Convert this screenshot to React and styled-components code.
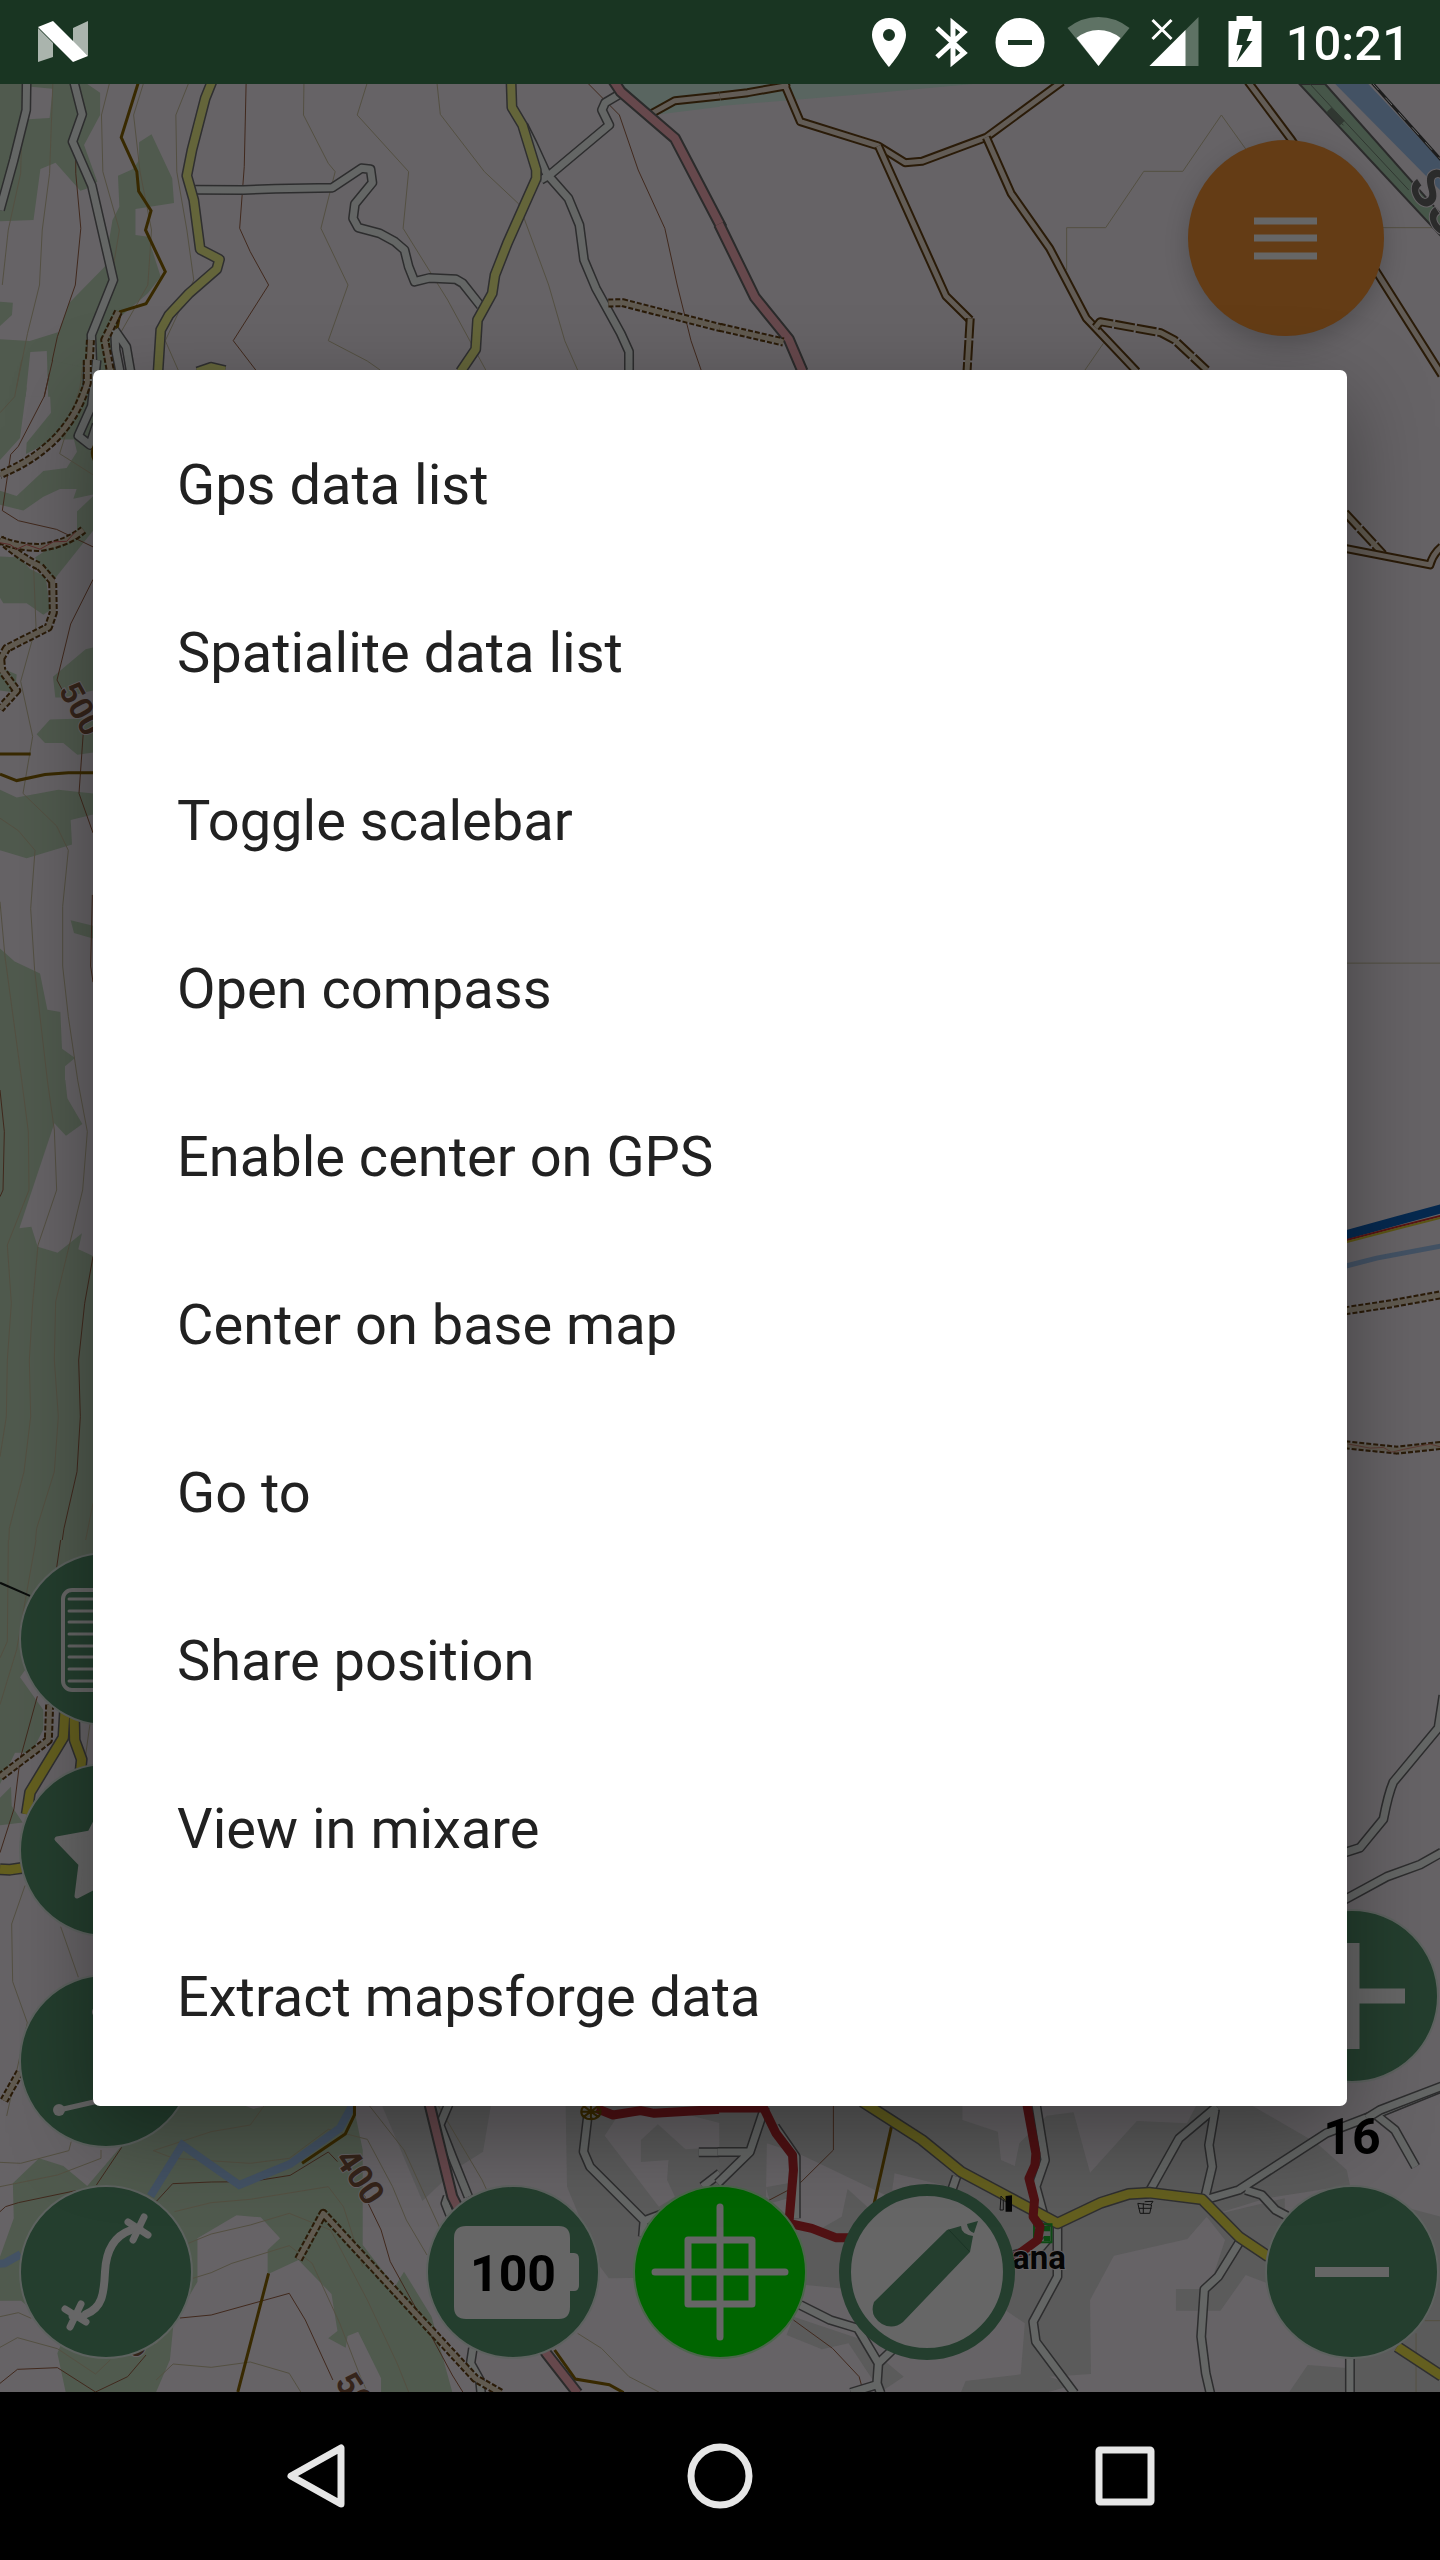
import React from "react";
import styled, { createGlobalStyle } from "styled-components";

const GlobalStyle = createGlobalStyle`
  * { box-sizing: border-box; }
  html, body, #root { height: 100%; }
  body { margin: 0; background: #000; font-family: Roboto, "Liberation Sans", sans-serif; }
  button { font: inherit; color: inherit; cursor: pointer; }
`;

const Screen = styled.div`
  display: grid;
  grid-template-rows: 84px 1fr 168px;
  min-height: 100vh;
`;

/* ---------- status bar ---------- */

const StatusBar = styled.header`
  display: flex;
  align-items: center;
  justify-content: space-between;
  padding: 0 30px 0 33px;
  background: #193522;
  color: #fff;
`;

const StatusGroup = styled.div`
  display: flex;
  align-items: center;
`;

const StatusSvg = styled.svg`
  display: block;
  height: 84px;
`;

const Clock = styled.time`
  padding: 4px 0 0 6px;
  font-size: 49px;
  font-weight: 500;
  line-height: 80px;
`;

function StatusIcon({ width, children }) {
  return (
    <StatusSvg width={width} viewBox={`${-width / 2} 0 ${width} 84`} fill="#fff" aria-hidden="true">
      {children}
    </StatusSvg>
  );
}

/* ---------- map ---------- */

const MapArea = styled.main`
  position: relative;
  overflow: hidden;
  background: #666366;
`;

const MapCanvas = styled.svg`
  position: absolute;
  inset: 0;
  width: 100%;
  height: 100%;

  path { vector-effect: non-scaling-stroke; }
`;

const MapText = styled.text`
  font-family: Roboto, "Liberation Sans", sans-serif;
  font-size: ${(p) => p.$size}px;
  font-weight: ${(p) => p.$weight || 700};
  fill: ${(p) => p.$color};
  stroke: #666366;
  stroke-width: 2px;
  paint-order: stroke;
`;

function Tile({ x, y, sx, sy, children }) {
  return <g transform={`translate(${x} ${y}) scale(${1 / sx} ${1 / sy})`}>{children}</g>;
}

const roadKinds = {
  street: { casing: "#2d2d2e", fill: "#646665", outer: 10, inner: 7 },
  secondary: { casing: "#2f2f30", fill: "#64653a", outer: 11, inner: 8 },
  yellow: { casing: "#2f2f30", fill: "#645f1f", outer: 12, inner: 9 },
  primary: { casing: "#2b2b2b", fill: "#66484c", outer: 12, inner: 8 },
  track: { casing: "#2a1b08", fill: "#625c56", outer: 9, inner: 5 },
  dashed: { casing: "#2a1b08", fill: "#605a50", outer: 9, inner: 5, dash: "5 2" },
  broken: { casing: "#2a1b08", fill: "#605a50", outer: 9, inner: 5, dash: "20 2" },
};

function Road({ kind, d }) {
  const k = roadKinds[kind];
  return (
    <g fill="none" strokeLinejoin="round">
      <path d={d} stroke={k.casing} strokeWidth={k.outer} strokeDasharray={k.dash} />
      <path d={d} stroke={k.fill} strokeWidth={k.inner} />
    </g>
  );
}

const Forest = ({ d }) => <path d={d} fill="#505a4e" />;
const Ground = ({ d }) => <path d={d} fill="#666366" />;
const Town = ({ d }) => <path d={d} fill="#5b5b5b" />;
const Contour = ({ d }) => <path d={d} fill="none" stroke="#545042" strokeWidth="1" />;
const MajorContour = ({ d }) => <path d={d} fill="none" stroke="#41291d" strokeWidth="1" />;
const Trail = ({ d }) => <path d={d} fill="none" stroke="#382900" strokeWidth="3" />;
const River = ({ d }) => <path d={d} fill="none" stroke="#435264" strokeWidth="8" />;
const Route = ({ d }) => <path d={d} fill="none" stroke="#501113" strokeWidth="9" strokeLinejoin="round" />;

function MapDrawing() {
  return (
    <MapCanvas viewBox="0 84 1440 2308" preserveAspectRatio="xMidYMid slice" aria-hidden="true">
      <Tile x={0} y={0} sx={2.178} sy={3}>
        <Forest d="M0 252H190L218 278V345L183 435L212 545L188 566L175 572L121 488L88 507L73 660L0 664Z" />
        <Ground d="M68 260L115 266L108 354L63 358Z" />
        <Forest d="M303 427L330 403L375 535L379 609L295 627V705L322 710L350 830L322 880L262 950L230 1110V1200H105L102 1053L66 1056L55 1200H0V1018L65 1023L128 996L150 910L228 800L245 660L260 620L257 527L290 507L303 480Z" />
        <Forest d="M0 905L28 908L26 945L0 978Z" />
        <path d="M1345 252H1568V320L1425 345Z" fill="#596560" />
        <Contour d="M50 252L45 520L18 690L5 855M115 252L108 520L92 690L86 855L60 1000L32 1190M238 252L221 345L224 515L260 690L240 855M312 252L291 345L305 515L330 690L322 855L262 1000M410 252L383 345L385 515L407 690L422 840L360 1022L388 1110" />
        <Contour d="M662 252L661 345L715 490L730 515L699 685L758 855L715 1022L800 1083L828 1110M799 252L778 345L890 515L878 685L975 900L1058 1110M952 252L959 343L1055 515L1130 612L1195 855L1230 1022L1258 1110" />
        <MajorContour d="M536 252L532 500L522 685L545 755L585 855L508 1022L557 1110M165 450V520L176 685L164 855L125 1010L95 1200M1282 252L1349 345L1390 510L1448 685L1475 855L1505 1022L1527 1110" />
        <Trail d="M303 240L264 412L298 515L302 574L329 632L317 690L360 815L318 911L262 935L255 985L250 1110" />
        <Road kind="street" d="M58 240L57 330L30 480L0 630" />
        <Road kind="street" d="M160 240L179 343L158 425L200 557L247 840L199 1005L202 1110" />
        <Road kind="street" d="M250 990L275 1040L285 1120M250 990L252 1050L262 1120" />
        <Road kind="street" d="M425 569L530 570L600 566L724 563L787 505L807 508L811 548L773 612L769 655L780 683L827 700L860 725L881 750L890 800L903 845L935 834L993 838L1008 850L1047 918" />
        <Road kind="street" d="M1355 278L1318 308L1311 330L1327 375L1197 525L1178 540M1140 375L1160 430L1190 520L1238 595L1262 675L1272 780L1298 865L1352 1000L1370 1055V1120" />
        <Road kind="secondary" d="M463 240L447 295L418 450L407 527L422 600L436 748L478 778L472 808L412 880L368 945L350 990L344 1120M430 1116L460 1102L490 1112" />
        <Road kind="secondary" d="M1113 240L1115 322L1138 375L1168 510L1168 535L1105 730L1078 825L1072 880L1040 960L1036 1048L1003 1115" />
        <Road kind="track" d="M1420 340L1470 302L1568 288" />
        <Road kind="primary" d="M1335 240L1352 275L1470 415L1572 684" />
        <Road kind="dashed" d="M1325 909L1356 908L1572 984" />
        <Road kind="dashed" d="M258 935L228 1020L240 1110" />
        <Road kind="dashed" d="M197 1020L192 1150L175 1200" />
      </Tile>

      <Tile x={720} y={0} sx={2.178} sy={3}>
        <path d="M0 252H550L290 285L0 318Z" fill="#596560" />
        <Contour d="M755 810V683H840L923 514H1008L1092 345L1145 447M1440 683H1568M835 1030L795 1110" />
        <Road kind="track" d="M0 288L60 278L142 258L175 365L345 438L403 488L440 484L580 412L745 245M145 262L138 240" />
        <Road kind="track" d="M345 438L492 888L545 960" />
        <Road kind="broken" d="M545 955L538 1115" />
        <Road kind="track" d="M580 412L634 580L718 745L798 955L908 1115" />
        <Road kind="broken" d="M818 982L828 965L960 998L990 1020L1060 1110" />
        <Road kind="track" d="M1150 245L1245 420L1432 820L1572 1125" />
        <Road kind="primary" d="M-2 672L76 892L150 1018L180 1115" />
        <Road kind="dashed" d="M0 982L138 1026" />
        <path d="M1340 252H1412L1568 480V570Z" fill="#435264" />
        <path d="M1262 252H1318L1575 650V715Z" fill="#465649" stroke="#2b2b2b" strokeWidth="2" />
        <path d="M1285 252L1500 570M1325 330L1358 376" fill="none" stroke="#303731" strokeWidth="1" />
        <path d="M1326 330L1355 370" fill="none" stroke="#303731" strokeWidth="7" />
        <path d="M1420 248L1572 482" fill="none" stroke="#1c1c1c" strokeWidth="3" />
        <path d="M1420 248L1572 482" fill="none" stroke="#666" strokeWidth="1" strokeDasharray="10 10" />
      </Tile>
      <MapText $size={54} $color="#2b2b2b" transform="translate(1406 184) rotate(57)">SS</MapText>

      <Tile x={0} y={360} sx={3} sy={2.178}>
        <Ground d="M0 80H279V1568H0Z" />
        <Forest d="M0 60H80L60 170L0 218ZM145 0L153 115L80 180L78 205L130 185L180 173H222L231 200L200 235L130 242L50 296L0 285V315L70 328L130 298L180 281H230L220 302L279 293V20Z" />
        <Forest d="M279 297L231 330V370L105 430L135 460L150 545L130 555L80 530L10 530L0 518V428L60 430L90 455L160 480L279 372Z" />
        <Forest d="M0 670L50 685L45 724L0 720ZM279 626L257 630L159 690L166 735H190L279 720ZM110 815L150 783L279 780V855L232 860L190 834H135Z" />
        <Forest d="M0 936L50 953L175 936L279 944V990L212 1002L216 1055L80 1085L0 1068ZM212 1220L279 1232V1260L222 1248ZM0 1282L44 1310L120 1336L142 1415L181 1420L186 1500L225 1520L195 1538V1568H0Z" />
        <Contour d="M65 0L44 80L0 115M250 0L240 60L179 204L279 250M100 440L108 580L62 700L98 820L69 944L170 1015L205 1068L188 1190V1320L205 1430L233 1568M0 998L55 1025L105 1068L92 1195L104 1330L142 1568M0 1180L15 1300L65 1568" />
        <MajorContour d="M158 0L132 80L55 188L32 206L7 328L55 350L170 369L279 407M279 478L212 575L171 697L195 730M250 810L237 944L279 1030M277 1165L272 1320L279 1355" />
        <Road kind="street" d="M265 0L262 60M290 0L275 100L235 165L270 185L290 140" />
        <Road kind="dashed" d="M262 0V50Q225 140 130 195Q80 225 0 250" />
        <Road kind="dashed" d="M0 390Q60 430 120 450L158 482L160 550L145 582L20 628L2 650L5 675L50 720L0 760" />
        <Road kind="dashed" d="M0 392Q60 410 125 408Q200 400 250 370" />
        <path d="M0 398L30 402L50 412L80 402L120 412L160 396L200 395L225 375" fill="none" stroke="#5c2c2c" strokeWidth="1" />
        <Trail d="M0 858H92M0 902L50 916L135 903L205 899H279" />
        <path d="M279 185Q266 202 279 220Z" fill="#382900" />
      </Tile>
      <MapText $size={32} $color="#35241a" transform="translate(58 690) rotate(61)">500</MapText>

      <Tile x={0} y={1080} sx={3} sy={3}>
        <Forest d="M0 0H279V1500H0Z" />
        <Ground d="M196 0H279V528L235 508L246 460L173 518L113 500L94 440L58 445L163 130L198 167L247 132L202 55Z" />
        <Contour d="M65 0L85 155L87 330L22 495L34 670L22 840L19 1010L0 1130M142 0L163 150L170 330L114 495L98 670L88 840L92 1010L72 1175L28 1345L22 1500M233 0L262 155L248 330L167 665L163 840L175 1010L163 1175L110 1345L94 1500M279 1270L248 1425" />
        <MajorContour d="M0 30L13 155L9 330L0 350M279 530L254 670L236 840L241 1010L231 1175L192 1345L175 1460" />
      </Tile>

      <Tile x={0} y={1540} sx={3} sy={1.823}>
        <Forest d="M0 0H279V60L60 250L130 310V345L95 388H45L0 445ZM0 470L33 450L35 485L68 515L0 520Z" />
        <Contour d="M25 0L22 185L0 215M108 0L70 130L50 200L0 300M75 630L35 700L38 805L82 880L20 1050M270 335L255 400" />
        <MajorContour d="M112 285L60 400L42 490L0 570M182 0L170 50" />
        <Contour d="M182 705L235 797" />
        <path d="M0 78L90 102" fill="none" stroke="#0b0d0c" strokeWidth="2" />
        <Road kind="dashed" d="M149 300L145 365L0 432M60 970L12 1022" />
        <Road kind="yellow" d="M195 310L190 360L90 460L80 500M222 310L224 365L245 400L240 430M0 600L30 601L65 598" />
      </Tile>

      <Tile x={0} y={2090} sx={2.178} sy={3}>
        <Forest d="M0 632V500L30 385L28 280L85 205L138 228L190 288L262 172L330 40H520L552 57L578 48H770L790 180V465L860 590L880 545L940 680L985 906H860L830 765H893L930 906H830V865L780 725L757 738L753 773L715 745L735 723L722 612L650 510L583 553V480L610 445L568 382L515 376L430 445V575L378 700L370 810L340 906H143L125 790L140 740L46 632Z" />
        <Town d="M830 40H1070L1052 185L995 235L920 333L885 220Z" />
        <Town d="M1232 40H1570V560L1326 565L1307 530L1235 290Z" />
        <Ground d="M1345 78L1317 137L1435 350L1470 320L1453 270L1456 210L1396 216V150L1433 103L1493 178L1570 172V100L1500 75Z" />
        <Contour d="M0 217L45 220L150 182L155 155M0 290L125 255L220 205V180M334 182L460 125L545 105L575 48M334 182L378 205L545 220L630 205L715 118L800 148L855 290L885 390L930 495M380 365L460 338L545 328L715 290L748 350L790 530M410 460L460 432L545 405L630 370L720 420L800 630L865 820L890 906M420 565L460 548L505 520L630 467L680 520L740 700L785 860L800 906M0 680L40 668L68 685M0 772L38 743L125 776L208 852L240 810M340 870L377 822L460 832L545 816L630 850L655 906M805 48L880 180L985 495M955 48L1050 270L1075 345M1258 730L1310 775L1370 860L1435 906" />
        <MajorContour d="M0 365L12 350L40 338L165 302M265 172L210 285M340 335L376 281L460 276L545 275L632 256L715 186L735 215M793 315L830 420L850 515L940 740L985 855L1008 906M392 684L460 675L630 610L665 690L725 870M0 880L38 838L125 833L208 906L278 860L318 795" />
        <River d="M-5 522L10 520L45 493M328 318L397 165L521 285L632 222L740 115L768 45" />
        <Trail d="M585 550L518 906M658 220L752 132L772 75V40M1208 780L1253 867L1327 884L1358 908" />
        <Road kind="street" d="M978 40L958 105L985 200L1020 320M975 320L970 340L980 375M1030 775L1025 820L1045 870L1048 910" />
        <Road kind="street" d="M1280 80L1271 185L1285 230L1403 392L1450 368M1403 392L1400 440M1568 187H1522M1568 250L1530 290" />
        <Road kind="primary" d="M935 40L985 320L1040 470L1190 790L1258 910" />
        <Road kind="dashed" d="M650 508L704 370L1035 865L1092 910" />
        <Route d="M1300 56L1335 75L1395 62L1425 70L1570 58" />
        <path d="M1266 65A20 22 0 1 0 1308 65A20 22 0 1 0 1266 65M1266 65H1308M1287 42V86M1272 49L1302 80M1302 49L1272 80" fill="none" stroke="#382900" strokeWidth="2" />
      </Tile>
      <MapText $size={34} $color="#35241a" transform="translate(334 2159) rotate(56)">400</MapText>
      <MapText $size={34} $color="#35241a" transform="translate(334 2382) rotate(57)">500</MapText>
      <MapText $size={34} $color="#35241a" transform="translate(134 2360) rotate(-40)">50</MapText>

      <Tile x={720} y={2090} sx={2.178} sy={3}>
        <Town d="M-2 40H1150L1300 160L1365 240L1372 285L1190 325L1060 380L1018 447L858 497L806 630L808 852L717 860L770 885L715 906H525L535 873L655 853L664 700L600 640L0 560Z" />
        <Ground d="M528 40H1040L1017 100L908 93L806 248L770 67L712 77L652 160L642 228L612 210L605 125L528 90Z" />
        <Ground d="M102 160L170 190L375 325L360 400L278 297L265 380L215 420L150 380L100 320ZM380 250L500 290L440 310L375 300Z" />
        <Town d="M100 292L165 275L160 320L110 340ZM1060 380L1230 325V600L1145 555L1090 662H993V597H1065L1100 450ZM145 735L160 680L300 745L400 860L350 906L280 760L222 778ZM1240 906L1280 825L1370 835L1360 906ZM1500 355L1570 380V906H1380V800Z" />
        <Contour d="M1516 730V906M1535 692H1568" />
        <MajorContour d="M247 48V180L170 285L105 332M160 690L245 775L303 860L310 895" />
        <Trail d="M375 100L335 345" />
        <Road kind="street" d="M98 50L65 186L-5 280M-5 186H65M165 385L165 200L120 110M515 260L505 300" />
        <Road kind="street" d="M688 40L708 210L688 290L708 390L735 400V560L682 695L688 755L772 910M640 495L700 470L712 450" />
        <Road kind="street" d="M935 305L1000 145L1082 50M1078 60L1065 165L1072 230L1055 330L1130 300L1320 130L1430 72L1568 -5M1145 300L1180 315L1210 360L1235 378M1430 76L1470 120L1515 230" />
        <Road kind="street" d="M1132 455L1085 560L1055 598L1048 740L1058 850L1068 910M1372 805V910M175 645L240 690L300 715L345 820L375 780M345 820L342 880L350 910M342 884L285 908" />
        <Road kind="yellow" d="M310 35L440 150L525 245L620 315L735 400L830 338L890 312L935 308L1050 328L1130 440L1195 500M1475 770L1572 858" />
        <path d="M684 403H722V457H684Z" fill="none" stroke="#0d4a14" strokeWidth="2" />
        <path d="M705 408H719V424H705ZM705 438H719V453H705Z" fill="#0d4a14" />
        <Route d="M-5 54H95L122 130L158 195L160 240L150 400L200 415L252 443H285M668 40L688 190L686 225L673 265L685 330L682 380L697 410L692 450L635 508" />
        <path d="M622 365V318L636 316V365Z" fill="#050505" />
        <path d="M620 330L612 318L610 360L617 360V330M910 340L940 345L936 370H915ZM925 335L943 334L938 345M912 355H940M922 340V370" fill="none" stroke="#151515" strokeWidth="1" />
      </Tile>
      <MapText $size={33} $color="#050505" x="1012" y="2269">ana</MapText>

      <Tile x={1320} y={360} sx={3} sy={2.24}>
        <Road kind="broken" d="M75 342L190 435" />
        <Road kind="track" d="M75 422L330 459Q338 435 365 418" />
        <Contour d="M81 1351H360" />
      </Tile>

      <Tile x={1320} y={1060} sx={3} sy={1.479}>
        <path d="M75 259L230 238L365 220" fill="none" stroke="#06294f" strokeWidth="9" />
        <path d="M75 267L230 247L365 230" fill="none" stroke="#591414" strokeWidth="2" />
        <path d="M75 270L230 250L365 233" fill="none" stroke="#5c5514" strokeWidth="2" />
        <path d="M75 305L170 293L365 275" fill="none" stroke="#435264" strokeWidth="5" />
        <Road kind="dashed" d="M75 371L220 360L365 347M75 569L230 577L365 570" />
        <path d="M85 568L150 574L190 573L215 580L250 576L330 568L360 572" fill="none" stroke="#5c3a34" strokeWidth="1" />
        <Road kind="street" d="M70 1173L120 1165L190 1123Q205 1085 220 1068L355 988L370 940M70 1243L200 1208L300 1190L365 1172M140 1565L180 1553L365 1518" />
      </Tile>
    </MapCanvas>
  );
}

/* ---------- map controls ---------- */

const RoundButton = styled.button`
  display: grid;
  place-items: center;
  width: ${(p) => p.$size || 174}px;
  height: ${(p) => p.$size || 174}px;
  padding: 0;
  border: ${(p) => p.$border || "2px solid #5d625f"};
  border-radius: 50%;
  background: ${(p) => p.$fill || "#243e2e"};
`;

const Glyph = styled.svg`
  display: block;
  grid-area: 1 / 1;
`;

const MenuFab = styled(RoundButton)`
  position: absolute;
  top: 56px;
  right: 56px;
  box-shadow: 0 8px 24px rgba(0, 0, 0, 0.2);
`;

const LeftTools = styled.div`
  position: absolute;
  left: 19px;
  bottom: 33px;
  display: flex;
  flex-direction: column;
  gap: 37px;
`;

const CenterTools = styled.div`
  position: absolute;
  left: 0;
  right: 0;
  bottom: 32px;
  display: grid;
  grid-template-columns: repeat(3, 207px);
  justify-content: center;
  place-items: center;
`;

const ZoomTools = styled.div`
  position: absolute;
  right: 1px;
  bottom: 33px;
  display: flex;
  flex-direction: column;
  align-items: center;
`;

const ZoomLevel = styled.output`
  padding-top: 6px;
  font-size: 50px;
  font-weight: 700;
  line-height: 96px;
  color: #000;
`;

const BatteryLevel = styled.span`
  grid-area: 1 / 1;
  padding-top: 4px;
  font-size: 50px;
  font-weight: 700;
  line-height: 56px;
  color: #000;
`;

function Icon({ children }) {
  return (
    <Glyph width="150" height="150" viewBox="-75 -75 150 150" fill="none" stroke="#666" strokeLinecap="round" strokeLinejoin="round" aria-hidden="true">
      {children}
    </Glyph>
  );
}

const listLines = [-40, -28, -17, -5, 7, 18, 30, 42];

/* ---------- dialog ---------- */

const DialogLayer = styled.div`
  position: absolute;
  inset: 0;
  display: flex;
  align-items: center;
  padding: 0 93px;
`;

const Menu = styled.ul`
  width: 100%;
  margin: 0;
  padding: 28px 0;
  list-style: none;
  border-radius: 7px;
  background: #fff;
  box-shadow: 0 28px 84px rgba(0, 0, 0, 0.36);
`;

const MenuItem = styled.button`
  display: block;
  width: 100%;
  height: 168px;
  padding: 6px 84px 0;
  border: 0;
  background: transparent;
  color: #212121;
  font-size: 56px;
  line-height: 66px;
  text-align: left;
`;

const items = [
  "Gps data list",
  "Spatialite data list",
  "Toggle scalebar",
  "Open compass",
  "Enable center on GPS",
  "Center on base map",
  "Go to",
  "Share position",
  "View in mixare",
  "Extract mapsforge data",
];

/* ---------- navigation bar ---------- */

const NavBar = styled.nav`
  display: grid;
  grid-template-columns: repeat(3, 405px);
  justify-content: center;
  background: #000;
`;

const NavButton = styled.button`
  display: grid;
  place-items: center;
  padding: 0;
  border: 0;
  background: transparent;
`;

function NavIcon({ children }) {
  return (
    <svg width="84" height="84" viewBox="-42 -42 84 84" fill="none" stroke="#e6e6e6" strokeWidth="7" strokeLinejoin="round" aria-hidden="true">
      {children}
    </svg>
  );
}

export default function App() {
  return (
    <>
      <GlobalStyle />
      <Screen>
        <StatusBar>
          <StatusIcon width={60}>
            <path d="M-25 28L-10 43V57L-25 62ZM10 28L25 21V56L10 42Z" opacity=".63" />
            <path d="M-25 27L-10 21L25 56L10 62Z" />
          </StatusIcon>
          <StatusGroup>
            <StatusIcon width={64}>
              <path fillRule="evenodd" d="M0 18C-10 18-17 25-17 35C-17 48 0 67 0 67S17 48 17 35C17 25 10 18 0 18ZM0 29A6 6 0 1 1 0 41A6 6 0 1 1 0 29Z" />
            </StatusIcon>
            <StatusIcon width={60}>
              <path d="M-14 28L13 53L2 62V23L13 32L-14 57" fill="none" stroke="#fff" strokeWidth="5" />
            </StatusIcon>
            <StatusIcon width={78}>
              <path fillRule="evenodd" d="M0 18A24.500 24.500 0 1 1 0 67A24.500 24.500 0 1 1 0 18ZM-12 40V45H12V40Z" />
            </StatusIcon>
            <StatusIcon width={79}>
              <path d="M-31 28Q-17 17 0 17T31 28L0 66Z" opacity=".3" />
              <path d="M-22 38Q-12 30 0 30T22 38L0 66Z" />
            </StatusIcon>
            <StatusIcon width={71}>
              <path d="M25 17V66H-24Z" opacity=".3" />
              <path d="M12 30V66H-24Z" />
              <path d="M-21 20L-2 39M-2 20L-21 39" stroke="#fff" strokeWidth="3" />
            </StatusIcon>
            <StatusIcon width={71}>
              <path fillRule="evenodd" d="M-8 16H8V21H17V67H-16V21H-8ZM-5 29L-8 45H-2L-8 62L8 41H2L7 29Z" />
            </StatusIcon>
            <Clock>10:21</Clock>
          </StatusGroup>
        </StatusBar>

        <MapArea>
          <MapDrawing />

          <MenuFab $size={196} $border="0" $fill="#643c15" aria-label="Menu">
            <Icon>
              <path d="M-32-17H31M-32 0H31M-32 18H31" strokeWidth="7" strokeLinecap="butt" />
            </Icon>
          </MenuFab>

          <LeftTools>
            <RoundButton aria-label="Notes list">
              <Icon>
                <rect x="-43" y="-49" width="86" height="100" rx="9" strokeWidth="4" />
                <path d={listLines.map((y) => `M-37 ${y}H37`).join("")} strokeWidth="3" />
              </Icon>
            </RoundButton>
            <RoundButton aria-label="Bookmarks">
              <Icon>
                <path d="M0-48L15-17L49-11L25 14L30 46L0 31L-29 46L-25 14L-49-11L-16-17Z" fill="#666" strokeWidth="5" />
              </Icon>
            </RoundButton>
            <RoundButton aria-label="Log">
              <Icon>
                <path d="M-47 49L23 33L-8-49L45-30" strokeWidth="5" />
                <g fill="#666" stroke="none">
                  <circle cx="-47" cy="49" r="6" />
                  <circle cx="23" cy="39" r="6" />
                  <circle cx="-8" cy="-49" r="6" />
                </g>
              </Icon>
            </RoundButton>
            <RoundButton aria-label="Form notes">
              <Icon>
                <path d="M-20 42C-4 36-2 22-1 0S8-36 25-42" strokeWidth="8" />
                <path d="M38-55L27-32M22-50L42-37M28-44H34M-25 32L-36 55M-41 37L-20 50M-34 44H-22" strokeWidth="7" />
              </Icon>
            </RoundButton>
          </LeftTools>

          <CenterTools>
            <RoundButton aria-label="Battery">
              <Icon>
                <path d="M-47-46H46Q57-46 57-34V-19H61Q66-19 66-13V13Q66 19 61 19H57V35Q57 47 46 47H-47Q-59 47-59 35V-34Q-59-46-47-46Z" fill="#666" stroke="none" />
              </Icon>
              <BatteryLevel>100</BatteryLevel>
            </RoundButton>
            <RoundButton $fill="#006500" $border="2px solid #4c664c" aria-label="Gps">
              <Icon>
                <path d="M-65 0H65M0-65V65M-32-32H32V32H-32Z" strokeWidth="7" />
              </Icon>
            </RoundButton>
            <RoundButton $size={176} $fill="#666" $border="12px solid #243e2e" aria-label="Edit">
              <Icon>
                <g fill="#243e2e" stroke="none">
                  <path d="M20-42L34-46Q34-38 46-36L43-20L-24 50Q-34 58-45 52Q-58 44-53 30Z" />
                  <path d="M40-48L51-51L47-39Q41-41 40-48Z" />
                </g>
                <path d="M22-42L42-21" strokeWidth="1" stroke="#1b3325" />
              </Icon>
            </RoundButton>
          </CenterTools>

          <ZoomTools>
            <RoundButton aria-label="Zoom in">
              <Icon>
                <path d="M-53 0H53M0-53V53" strokeWidth="15" strokeLinecap="butt" />
              </Icon>
            </RoundButton>
            <ZoomLevel>16</ZoomLevel>
            <RoundButton aria-label="Zoom out">
              <Icon>
                <path d="M-37 0H37" strokeWidth="10" strokeLinecap="butt" />
              </Icon>
            </RoundButton>
          </ZoomTools>

          <DialogLayer role="dialog" aria-label="Map options">
            <Menu>
              {items.map((label) => (
                <li key={label}>
                  <MenuItem type="button">{label}</MenuItem>
                </li>
              ))}
            </Menu>
          </DialogLayer>
        </MapArea>

        <NavBar aria-label="System">
          <NavButton aria-label="Back">
            <NavIcon>
              <path d="M26-28V28L-24 0Z" />
            </NavIcon>
          </NavButton>
          <NavButton aria-label="Home">
            <NavIcon>
              <circle r="29" />
            </NavIcon>
          </NavButton>
          <NavButton aria-label="Recent apps">
            <NavIcon>
              <rect x="-26" y="-26" width="52" height="52" rx="1" />
            </NavIcon>
          </NavButton>
        </NavBar>
      </Screen>
    </>
  );
}
